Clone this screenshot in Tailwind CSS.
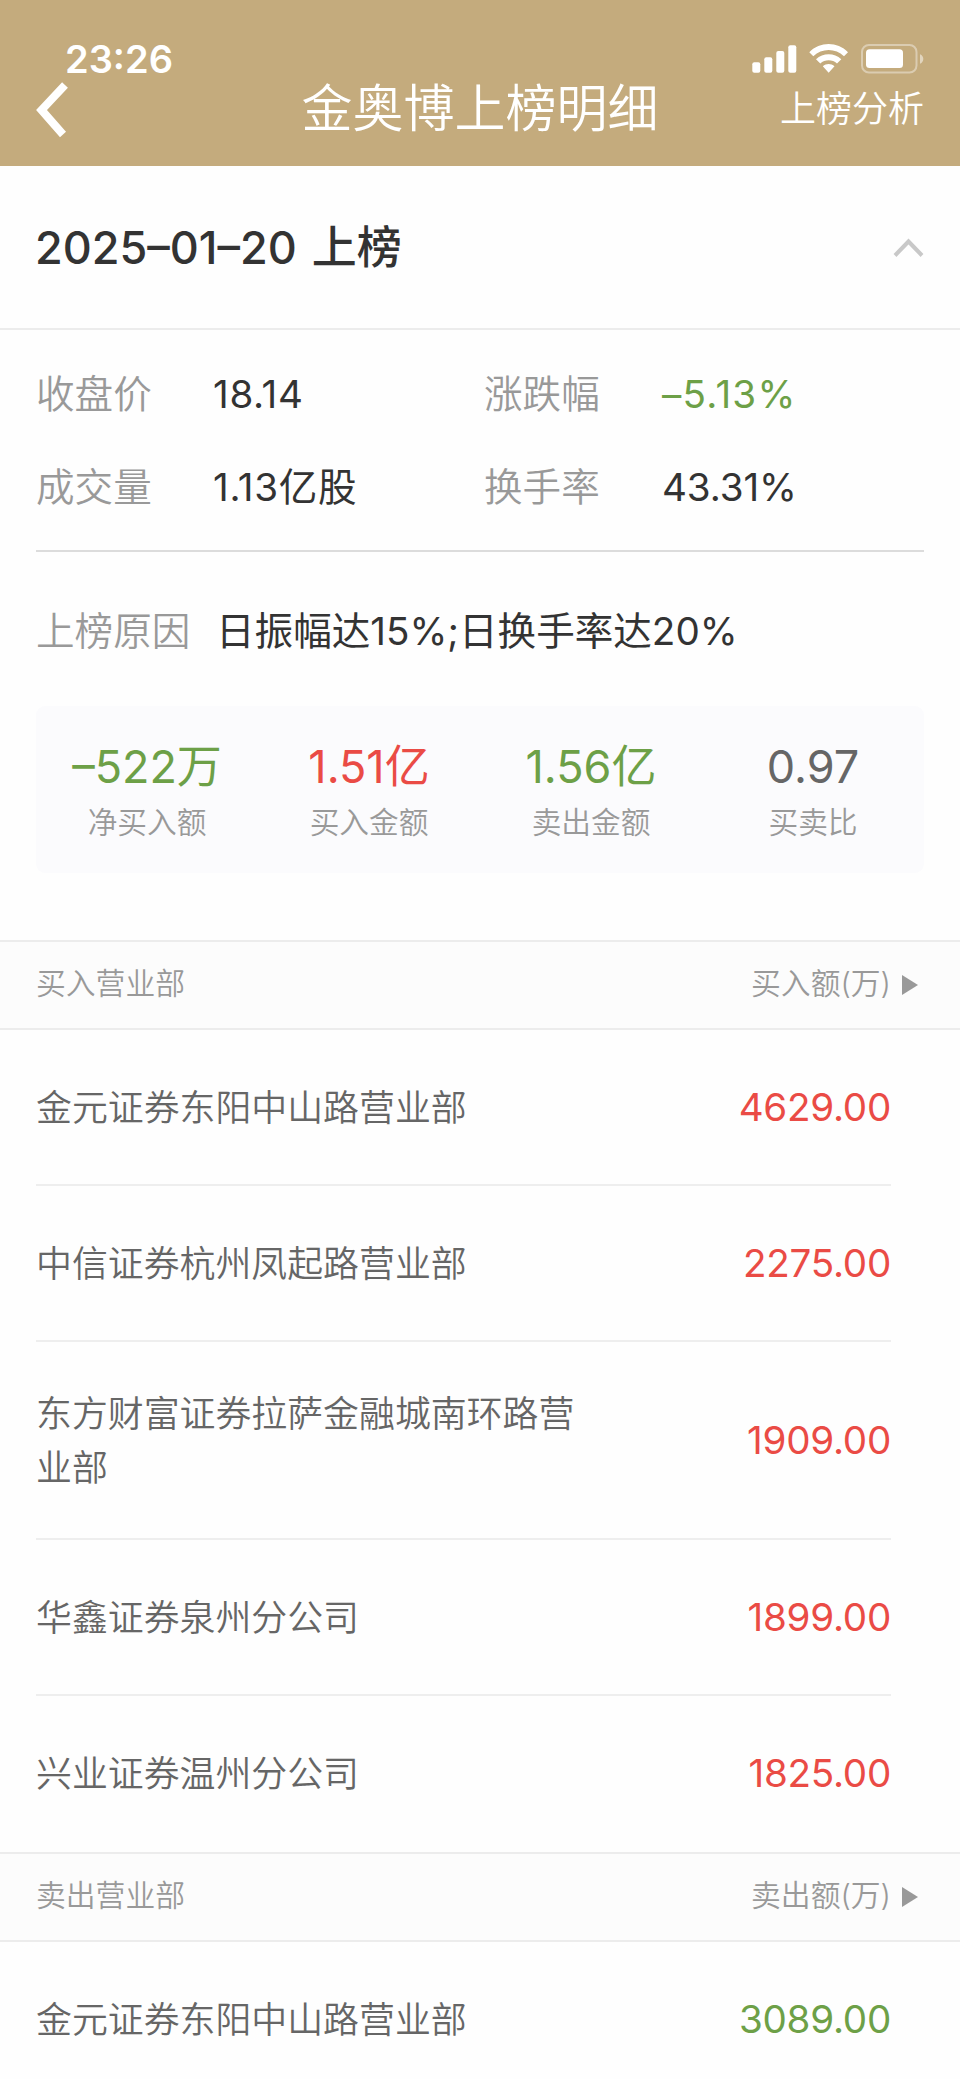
<!DOCTYPE html>
<html lang="zh-CN">
<head>
<meta charset="utf-8">
<title>金奥博上榜明细</title>
<script src="https://cdn.jsdelivr.net/npm/@tailwindcss/browser@4"></script>
</head>
<body class="w-[960px] h-[2079px] overflow-hidden bg-[#fefefe] text-[#333] font-[350] font-[Inter,'Noto_Sans_CJK_SC',sans-serif]">
<header class="h-[166px] bg-[#c4ab7d] text-white">
  <div class="h-[81px] pt-[37px] pl-[65px] pr-[36px] flex justify-between items-center">
    <span class="text-[38px] leading-none font-semibold">23:26</span>
    <svg class="w-[172px] h-[30px]" viewBox="752 44 172 30" fill="#fff">
      <rect x="752.3" y="62.3" width="8" height="10.4" rx="2"/>
      <rect x="764.3" y="57.3" width="8" height="15.4" rx="2"/>
      <rect x="776.3" y="51" width="8" height="21.7" rx="2"/>
      <rect x="788.3" y="45.3" width="8" height="27.4" rx="2"/>
      <path d="M809.3 52.2C820 41.400 837.300 41.400 848 52.200L844 56.200C835.500 48 821.800 48 813.300 56.200ZM816 59.300C823 52.600 834.300 52.600 841.300 59.300L837 63.400C832.500 59.300 824.800 59.300 820.300 63.400ZM822.800 66.300C826.200 63.300 831.100 63.300 834.500 66.300L828.650 72.700Z"/>
      <rect x="862" y="45" width="54.500" height="27.500" rx="7" fill="none" stroke="#fff" stroke-opacity=".4" stroke-width="2"/>
      <rect x="866" y="49.300" width="37" height="18.700" rx="3.500"/>
      <path d="M920 54.300C924.400 55.800 924.400 62.200 920 63.700Z" opacity=".5"/>
    </svg>
  </div>
  <div class="h-[56px] px-[36px] grid grid-cols-[1fr_auto_1fr] items-center">
    <svg class="w-[34px] h-[58px]" viewBox="36 81 34 58" fill="none" stroke="#fff" stroke-width="8"><path d="M65 85L41.500 110L63 134.500"/></svg>
    <h1 class="text-[51px] leading-none font-[350] pb-[3px]">金奥博上榜明细</h1>
    <span class="justify-self-end text-[36px] leading-none pb-[3px]">上榜分析</span>
  </div>
</header>
<main>
  <section class="h-[164px] pl-[35px] pr-[36px] border-b-2 border-[#ececec] flex items-center justify-between">
    <h2 class="text-[45px] leading-none font-medium [word-spacing:3px]">2025–01–20 上榜</h2>
    <svg class="w-[31px] h-[20px]" viewBox="893 237 31 20" fill="none" stroke="#c8c8c8" stroke-width="4"><path d="M895 255.500L908.500 241.500L922 255.500"/></svg>
  </section>
  <section class="mx-[36px] h-[222px] pt-[18px] border-b-2 border-[#dcdcdc] text-[38.600px] leading-none">
    <dl class="grid grid-cols-[177px_271px_178px_1fr] auto-rows-[93px] items-center">
      <dt class="text-[#999]">收盘价</dt><dd class="font-normal tracking-[0.7px]">18.14</dd>
      <dt class="text-[#999]">涨跌幅</dt><dd class="font-normal text-[#6da047] tracking-[1.3px]">–5.13%</dd>
      <dt class="text-[#999]">成交量</dt><dd class="font-normal tracking-[0.7px]">1.13亿股</dd>
      <dt class="text-[#999]">换手率</dt><dd class="font-normal tracking-[-0.1px]">43.31%</dd>
    </dl>
  </section>
  <section class="h-[154px] px-[36px] pt-[4px] flex items-center text-[38.600px] leading-none">
    <span class="w-[180px] text-[#999]">上榜原因</span><span class="font-normal">日振幅达15%;日换手率达20%</span>
  </section>
  <section class="mx-[36px] h-[167px] pt-[38px] rounded-[9px] bg-[#fbfbfd] grid grid-cols-4 text-center leading-none">
    <div><p class="text-[45px] h-[64px] font-normal text-[#6da047]">–522万</p><p class="text-[29.700px] text-[#999]">净买入额</p></div>
    <div><p class="text-[45px] h-[64px] font-normal text-[#ea4b45]">1.51亿</p><p class="text-[29.700px] text-[#999]">买入金额</p></div>
    <div><p class="text-[45px] h-[64px] font-normal text-[#6da047]">1.56亿</p><p class="text-[29.700px] text-[#999]">卖出金额</p></div>
    <div><p class="text-[45px] h-[64px] font-normal text-[#666]">0.97</p><p class="text-[29.700px] text-[#999]">买卖比</p></div>
  </section>
  <section class="mt-[67px]">
    <div class="h-[90px] border-y-2 border-[#ececec] bg-[#fcfcfc] pl-[36px] pr-[42px] flex items-center text-[29.800px] leading-none text-[#999]">
      <span class="flex-1 pb-[2px]">买入营业部</span><span class="mr-[11px] pb-[2px]">买入额(万)</span>
      <svg class="w-[16px] h-[20px]" viewBox="0 0 16 20" fill="#999"><path d="M0 0L16 10L0 20Z"/></svg>
    </div>
    <ul class="ml-[36px] mr-[69px] text-[35.900px] leading-[54px] text-[#666]">
      <li class="h-[156px] border-b-2 border-[#eee] flex items-center justify-between"><span class="w-[560px] pt-[2px]">金元证券东阳中山路营业部</span><span class="text-[38.600px] font-normal tracking-[-0.25px] text-[#ea4b45]">4629.00</span></li>
      <li class="h-[156px] border-b-2 border-[#eee] flex items-center justify-between"><span class="w-[560px] pt-[2px]">中信证券杭州凤起路营业部</span><span class="text-[38.600px] font-normal tracking-[-0.25px] text-[#ea4b45]">2275.00</span></li>
      <li class="h-[198px] border-b-2 border-[#eee] flex items-center justify-between"><span class="w-[560px] pt-[2px]">东方财富证券拉萨金融城南环路营业部</span><span class="text-[38.600px] font-normal tracking-[-0.25px] text-[#ea4b45]">1909.00</span></li>
      <li class="h-[156px] border-b-2 border-[#eee] flex items-center justify-between"><span class="w-[560px] pt-[2px]">华鑫证券泉州分公司</span><span class="text-[38.600px] font-normal tracking-[-0.25px] text-[#ea4b45]">1899.00</span></li>
      <li class="h-[156px] pb-[2px] flex items-center justify-between"><span class="w-[560px] pt-[2px]">兴业证券温州分公司</span><span class="text-[38.600px] font-normal tracking-[-0.25px] text-[#ea4b45]">1825.00</span></li>
    </ul>
  </section>
  <section>
    <div class="h-[90px] border-y-2 border-[#ececec] bg-[#fcfcfc] pl-[36px] pr-[42px] flex items-center text-[29.800px] leading-none text-[#999]">
      <span class="flex-1 pb-[2px]">卖出营业部</span><span class="mr-[11px] pb-[2px]">卖出额(万)</span>
      <svg class="w-[16px] h-[20px]" viewBox="0 0 16 20" fill="#999"><path d="M0 0L16 10L0 20Z"/></svg>
    </div>
    <ul class="ml-[36px] mr-[69px] text-[35.900px] leading-[54px] text-[#666]">
      <li class="h-[156px] pb-[2px] flex items-center justify-between"><span class="w-[560px] pt-[2px]">金元证券东阳中山路营业部</span><span class="text-[38.600px] font-normal tracking-[-0.25px] text-[#6da047]">3089.00</span></li>
    </ul>
  </section>
</main>
</body>
</html>
